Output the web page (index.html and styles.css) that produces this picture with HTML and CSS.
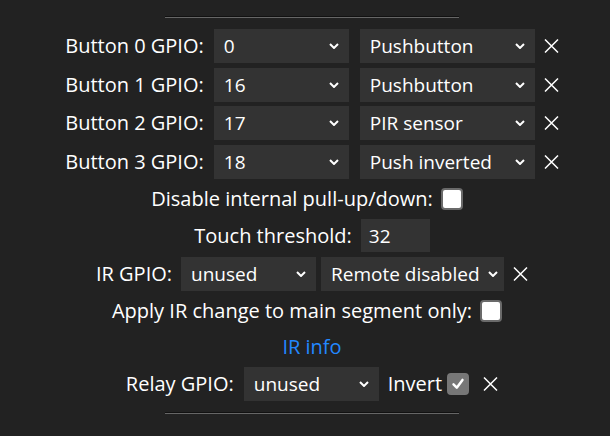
FILE: index.html
```html
<!DOCTYPE html>
<html lang="en">
<head>
<meta charset="utf-8">
<title>Button settings</title>
<link rel="stylesheet" href="styles.css">
</head>
<body>
<div class="page">
  <hr class="sep">

  <div class="row sel-row">
    <span class="lbl">Button 0 GPIO:</span>
    <div class="sel pin"><span>0</span><svg class="chev" viewBox="0 0 10 6"><path d="M1 1 L5 5 L9 1"/></svg></div>
    <div class="sel type"><span>Pushbutton</span><svg class="chev" viewBox="0 0 10 6"><path d="M1 1 L5 5 L9 1"/></svg></div>
    <svg class="close" viewBox="0 0 15 14"><path d="M1 0.5 L14 13.5 M14 0.5 L1 13.5"/></svg>
  </div>

  <div class="row sel-row">
    <span class="lbl">Button 1 GPIO:</span>
    <div class="sel pin"><span>16</span><svg class="chev" viewBox="0 0 10 6"><path d="M1 1 L5 5 L9 1"/></svg></div>
    <div class="sel type"><span>Pushbutton</span><svg class="chev" viewBox="0 0 10 6"><path d="M1 1 L5 5 L9 1"/></svg></div>
    <svg class="close" viewBox="0 0 15 14"><path d="M1 0.5 L14 13.5 M14 0.5 L1 13.5"/></svg>
  </div>

  <div class="row sel-row">
    <span class="lbl">Button 2 GPIO:</span>
    <div class="sel pin"><span>17</span><svg class="chev" viewBox="0 0 10 6"><path d="M1 1 L5 5 L9 1"/></svg></div>
    <div class="sel type"><span>PIR sensor</span><svg class="chev" viewBox="0 0 10 6"><path d="M1 1 L5 5 L9 1"/></svg></div>
    <svg class="close" viewBox="0 0 15 14"><path d="M1 0.5 L14 13.5 M14 0.5 L1 13.5"/></svg>
  </div>

  <div class="row sel-row">
    <span class="lbl">Button 3 GPIO:</span>
    <div class="sel pin"><span>18</span><svg class="chev" viewBox="0 0 10 6"><path d="M1 1 L5 5 L9 1"/></svg></div>
    <div class="sel type"><span>Push inverted</span><svg class="chev" viewBox="0 0 10 6"><path d="M1 1 L5 5 L9 1"/></svg></div>
    <svg class="close" viewBox="0 0 15 14"><path d="M1 0.5 L14 13.5 M14 0.5 L1 13.5"/></svg>
  </div>

  <div class="row cb-row">
    <span class="lbl">Disable internal pull-up/down:</span>
    <span class="cb"></span>
  </div>

  <div class="row in-row">
    <span class="lbl">Touch threshold:</span>
    <div class="num">32</div>
  </div>

  <div class="row sel-row">
    <span class="lbl lbl-ir">IR GPIO:</span>
    <div class="sel pin"><span>unused</span><svg class="chev" viewBox="0 0 10 6"><path d="M1 1 L5 5 L9 1"/></svg></div>
    <div class="sel remote"><span>Remote disabled</span><svg class="chev" viewBox="0 0 10 6"><path d="M1 1 L5 5 L9 1"/></svg></div>
    <svg class="close" viewBox="0 0 15 14"><path d="M1 0.5 L14 13.5 M14 0.5 L1 13.5"/></svg>
  </div>

  <div class="row cb-row">
    <span class="lbl">Apply IR change to main segment only:</span>
    <span class="cb"></span>
  </div>

  <div class="row link-row">
    <a class="link" href="#">IR info</a>
  </div>

  <div class="row sel-row">
    <span class="lbl">Relay GPIO:</span>
    <div class="sel pin"><span>unused</span><svg class="chev" viewBox="0 0 10 6"><path d="M1 1 L5 5 L9 1"/></svg></div>
    <span class="lbl lbl-inv">Invert</span>
    <span class="cb checked"><svg viewBox="0 0 22 22"><path d="M5.5 11.5 L9.5 15.5 L16.5 6"/></svg></span>
    <svg class="close close-relay" viewBox="0 0 15 14"><path d="M1 0.5 L14 13.5 M14 0.5 L1 13.5"/></svg>
  </div>

  <hr class="sep sep-bottom">
</div>
</body>
</html>
```

FILE: styles.css
```css
* { box-sizing: border-box; }

html, body {
  margin: 0;
  padding: 0;
  background: #222;
}

body {
  color: #fff;
  font-family: "Open Sans", "Noto Sans", sans-serif;
  font-size: 20px;
}

.page {
  padding: 16px 0 0 14px;
  display: flex;
  flex-direction: column;
  align-items: center;
}

.sep {
  width: 294px;
  height: 2px;
  margin: 0 0 9px 0;
  border: 0;
  border-top: 1px solid #111;
  border-bottom: 1px solid #666;
}

.sep-bottom {
  margin-top: 9px;
}

.row {
  display: flex;
  align-items: center;
  justify-content: center;
  white-space: nowrap;
}

.sel-row { height: 38.5px; }
.cb-row { height: 35.5px; }
.in-row { height: 38px; }
.link-row { height: 36px; }

.lbl {
  line-height: 1;
  margin-right: 10px;
}

.lbl-ir { margin-right: 9px; }

.sel {
  display: flex;
  align-items: center;
  justify-content: space-between;
  height: 34px;
  background: #333;
  padding: 0 10px 0 10px;
  font-size: 19px;
}

.sel.pin { width: 135px; }
.sel.type { width: 175px; margin-left: 11px; }
.sel.remote { width: 183px; margin-left: 5px; padding-right: 6px; }

.chev {
  width: 10px;
  height: 6px;
  flex: none;
}

.chev path {
  fill: none;
  stroke: #fff;
  stroke-width: 2;
}

.close {
  width: 15px;
  height: 14px;
  margin-left: 9px;
  flex: none;
}

.close path {
  stroke: #fff;
  stroke-width: 1.5;
  fill: none;
}

.close-relay { margin-left: 14px; }

.lbl-inv { margin-left: 9px; margin-right: 7px; }

.cb {
  width: 22px;
  height: 22px;
  border: 2px solid #6a6a6a;
  border-radius: 4px;
  background: #fff;
  margin-right: 10px;
  display: inline-flex;
}

.row .cb { margin-left: -2px; }

.cb.checked {
  background: #777;
  border-color: #777;
  margin-right: 0;
}

.cb.checked svg {
  width: 100%;
  height: 100%;
}

.cb.checked path {
  fill: none;
  stroke: #fff;
  stroke-width: 3;
  stroke-linecap: round;
  stroke-linejoin: round;
}

.num {
  width: 69px;
  height: 33px;
  background: #333;
  padding-left: 8px;
  display: flex;
  align-items: center;
  margin-left: -1px;
  font-size: 19px;
}

.link {
  color: #28f;
  text-decoration: none;
  line-height: 1;
}
```
